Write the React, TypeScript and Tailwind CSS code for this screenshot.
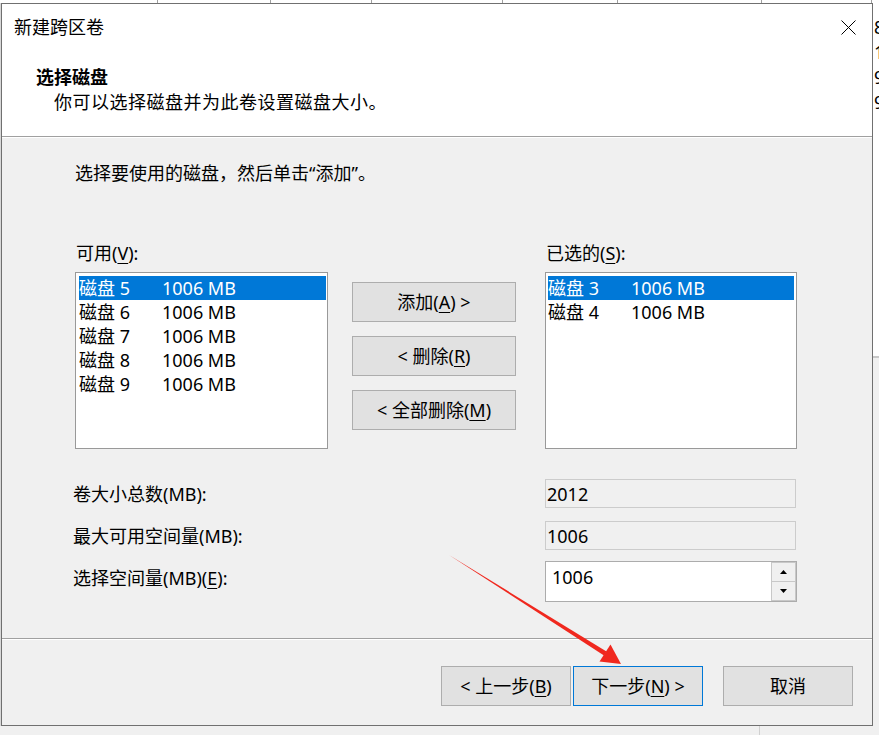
import React from "react";

const U = ({ c }: { c: string }) => (
  <span className="underline decoration-1 underline-offset-[3px]">{c}</span>
);

const Row = ({ disk, size, selected }: { disk: string; size: string; selected?: boolean }) => (
  <div
    className={
      "flex h-[24px] items-center leading-[24px] " +
      (selected ? "bg-[#0078d7] text-white" : "text-black")
    }
  >
    <span className="w-[83px] whitespace-nowrap">{disk}</span>
    <span className="whitespace-nowrap">{size}</span>
  </div>
);

const Btn = ({
  children,
  w,
  primary,
}: {
  children: React.ReactNode;
  w: string;
  primary?: boolean;
}) => (
  <div
    className={
      "flex h-[40px] items-center justify-center border bg-[#e1e1e1] text-[18px] leading-[24px] text-black " +
      w +
      (primary ? " border-[#0078d7]" : " border-[#adadad]")
    }
  >
    {children}
  </div>
);

export default function App() {
  return (
    <div className="relative flex h-[735px] w-[879px] flex-col overflow-hidden bg-white font-['Noto_Sans','Noto_Sans_CJK_SC',sans-serif] text-[18px] text-black">
      {/* background window strip (top) */}
      <div className="flex h-[3px] shrink-0 bg-white">
        <div className="w-[158px] border-r border-[#a0a0a0]" />
        <div className="w-[113px] border-r border-[#a0a0a0]" />
        <div className="w-[101px] border-r border-[#a0a0a0]" />
        <div className="w-[131px] border-r border-[#a0a0a0]" />
        <div className="w-[115px] border-r border-[#a0a0a0]" />
        <div className="w-[144px] border-r border-[#a0a0a0]" />
        <div className="w-[110px] border-r border-[#a0a0a0]" />
        <div className="flex-1" />
      </div>

      <div className="flex h-[723px] shrink-0">
        <div className="w-[1px] bg-[#d8d8d8]" />

        {/* dialog */}
        <div className="flex w-[872px] flex-col border border-[#707070] bg-[#f0f0f0]">
          {/* header */}
          <div className="h-[132px] bg-white">
            <div className="flex h-[46px] items-center justify-between pl-[12px] pr-[16px]">
              <span className="leading-[24px]">新建跨区卷</span>
              <svg width="15" height="15" viewBox="0 0 15 15">
                <path d="M0.5 0.5 L14.5 14.5 M14.5 0.5 L0.5 14.5" stroke="#000" strokeWidth="1" fill="none" />
              </svg>
            </div>
            <div className="mt-[15px] pl-[34px] font-bold leading-[25px]">选择磁盘</div>
            <div className="pl-[52px] leading-[24px] tracking-[0.5px]">你可以选择磁盘并为此卷设置磁盘大小。</div>
          </div>
          <div className="h-[1px] bg-[#a0a0a0]" />
          <div className="h-[1px] bg-white" />

          {/* body */}
          <div className="flex h-[500px] flex-col pl-[73px] pt-[23px]">
            <div className="leading-[24px]">选择要使用的磁盘，然后单击“添加”。</div>

            <div className="mt-[56px] flex">
              <div className="flex w-[253px] flex-col">
                <div className="pl-[1px] leading-[24px]">
                  可用(<U c="V" />):
                </div>
                <div className="mt-[7px] h-[177px] border border-[#999999] bg-white pl-[3px] pr-[1px] pt-[3px]">
                  <Row disk="磁盘 5" size="1006 MB" selected />
                  <Row disk="磁盘 6" size="1006 MB" />
                  <Row disk="磁盘 7" size="1006 MB" />
                  <Row disk="磁盘 8" size="1006 MB" />
                  <Row disk="磁盘 9" size="1006 MB" />
                </div>
              </div>

              <div className="ml-[24px] flex w-[164px] flex-col gap-[14px] pt-[41px]">
                <Btn w="w-[164px]">
                  添加(<U c="A" />) &gt;
                </Btn>
                <Btn w="w-[164px]">
                  &lt; 删除(<U c="R" />)
                </Btn>
                <Btn w="w-[164px]">
                  &lt; 全部删除(<U c="M" />)
                </Btn>
              </div>

              <div className="ml-[29px] flex w-[252px] flex-col">
                <div className="pl-[1px] leading-[24px]">
                  已选的(<U c="S" />):
                </div>
                <div className="mt-[7px] h-[177px] border border-[#999999] bg-white pl-[2px] pr-[2px] pt-[3px]">
                  <Row disk="磁盘 3" size="1006 MB" selected />
                  <Row disk="磁盘 4" size="1006 MB" />
                </div>
              </div>
            </div>

            {/* fields */}
            <div className="-ml-[2px] mt-[30px] flex flex-col">
              <div className="flex h-[29px] items-center">
                <div className="w-[472px] leading-[24px]">卷大小总数(MB):</div>
                <div className="flex h-[29px] w-[251px] items-center border border-[#cccccc] bg-[#f0f0f0] pl-[1px] leading-[24px]">
                  2012
                </div>
              </div>
              <div className="mt-[13px] flex h-[29px] items-center">
                <div className="w-[472px] leading-[24px]">最大可用空间量(MB):</div>
                <div className="flex h-[29px] w-[251px] items-center border border-[#cccccc] bg-[#f0f0f0] pl-[1px] leading-[24px]">
                  1006
                </div>
              </div>
              <div className="mt-[11px] flex h-[41px] items-start">
                <div className="w-[472px] pt-[5px] leading-[24px]">
                  选择空间量(MB)(<U c="E" />):
                </div>
                <div className="flex h-[41px] w-[252px] border border-[#acacac] bg-white">
                  <div className="flex-1 pl-[6px] pt-[3px] leading-[24px]">1006</div>
                  <div className="flex w-[25px] flex-col">
                    <div className="flex h-[20px] items-center justify-center border border-[#c8c8c8] bg-[#f0f0f0]">
                      <svg width="7" height="4" viewBox="0 0 7 4">
                        <path d="M3.5 0 L7 4 L0 4 Z" fill="#000" />
                      </svg>
                    </div>
                    <div className="flex flex-1 items-center justify-center border border-t-0 border-[#c8c8c8] bg-[#f0f0f0]">
                      <svg width="7" height="4" viewBox="0 0 7 4">
                        <path d="M0 0 L7 0 L3.5 4 Z" fill="#000" />
                      </svg>
                    </div>
                  </div>
                </div>
              </div>
            </div>
          </div>

          <div className="h-[1px] bg-[#a0a0a0]" />
          <div className="h-[1px] bg-white" />

          {/* footer */}
          <div className="flex h-[85px] items-start justify-end pr-[19px] pt-[26px]">
            <Btn w="w-[130px]">
              &lt; 上一步(<U c="B" />)
            </Btn>
            <div className="ml-[2px]">
              <Btn w="w-[130px]" primary>
                下一步(<U c="N" />) &gt;
              </Btn>
            </div>
            <div className="ml-[20px]">
              <Btn w="w-[130px]">取消</Btn>
            </div>
          </div>
        </div>

        {/* background window strip (right) */}
        <div className="flex flex-1 flex-col overflow-hidden bg-white">
          <div className="pl-[1px] pt-[12px] leading-[25px]">
            <div>8</div>
            <div>1</div>
            <div>9</div>
            <div>9</div>
          </div>
          <div className="mt-[241px] h-[2px] bg-[#c8c8c8]" />
          <div className="flex-1 bg-[#f0f0f0]" />
        </div>
      </div>

      {/* background bottom strip */}
      <div className="flex flex-1 bg-[#f0f0f0]">
        <div className="w-[760px] border-r border-[#d0d0d0]" />
      </div>

      {/* red annotation arrow */}
      <svg className="pointer-events-none absolute left-0 top-0" width="879" height="735" viewBox="0 0 879 735">
        <polygon points="449,555 604,655.5 606.5,651.5" fill="#f0281e" />
        <polygon points="621,664 599.5,661.5 610.5,644.5" fill="#f0281e" />
      </svg>
    </div>
  );
}
